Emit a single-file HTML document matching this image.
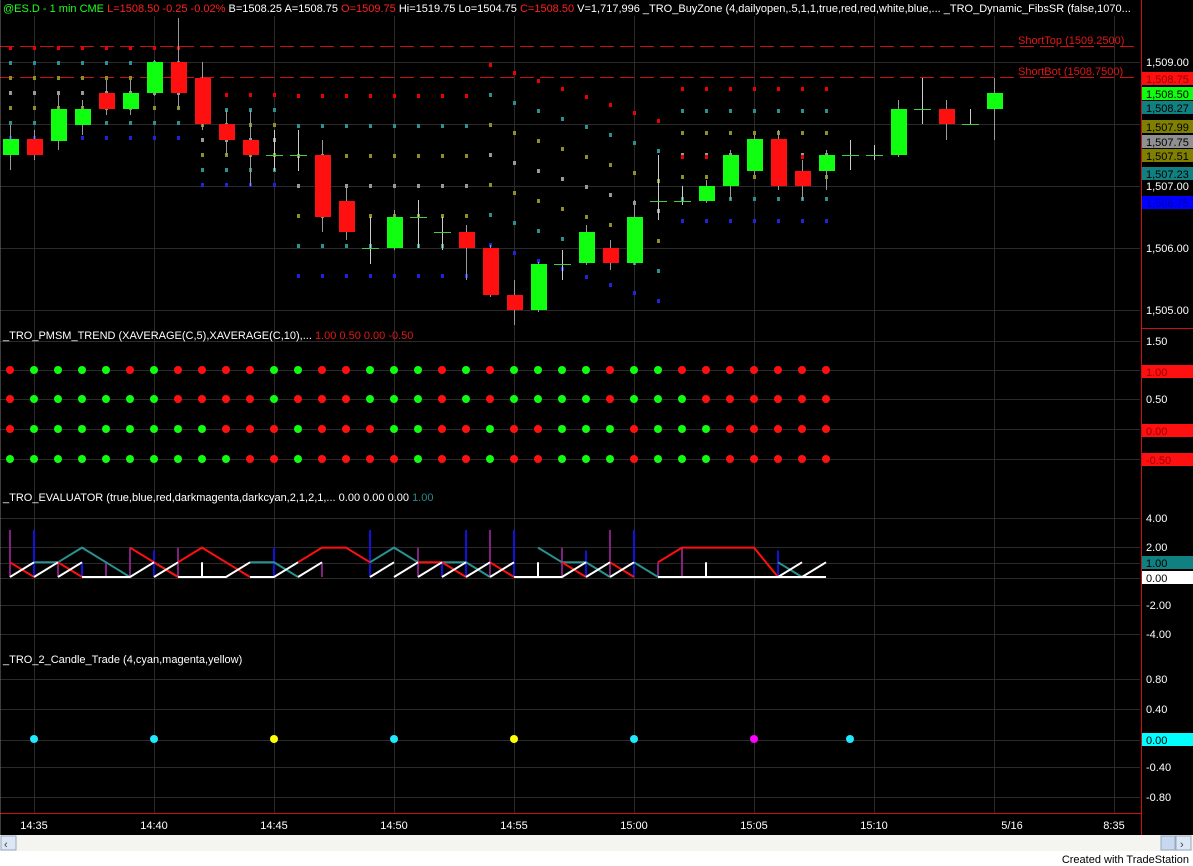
<!DOCTYPE html>
<html><head><meta charset="utf-8"><style>
html,body{margin:0;padding:0;background:#000;width:1193px;height:866px;overflow:hidden;font-family:"Liberation Sans",sans-serif}
svg{position:absolute;left:0;top:0}
text{font-family:"Liberation Sans",sans-serif;font-size:11px}
.ax{fill:#fff;font-size:11px}
</style></head><body>
<svg id="s" width="1193" height="866" viewBox="0 0 1193 866">
<rect width="1193" height="866" fill="#000"/>
<g id="grid" stroke="#2a2a2a" stroke-width="1"></g>
<!-- short lines -->
<line x1="0" y1="46.5" x2="1140" y2="46.5" stroke="#d01010" stroke-dasharray="14,6"/>
<line x1="0" y1="77.5" x2="1140" y2="77.5" stroke="#d01010" stroke-dasharray="14,6"/>
<text x="1018" y="44" fill="#e01818">ShortTop (1509.2500)</text>
<text x="1018" y="75" fill="#e01818">ShortBot (1508.7500)</text>
<g id="dots"></g>
<g id="candles"></g>
<g id="pm"></g>
<g id="ev" stroke-width="2" fill="none"></g>
<g id="tc"></g>
<!-- header -->
<rect x="0" y="0" width="1140" height="16" fill="#000"/>
<text x="3" y="12"><tspan fill="#20ff20">@ES.D - 1 min  CME</tspan><tspan fill="#ff2020">  L=1508.50  -0.25  -0.02%</tspan><tspan fill="#fff">  B=1508.25  A=1508.75</tspan><tspan fill="#ff2020">  O=1509.75</tspan><tspan fill="#fff">  Hi=1519.75  Lo=1504.75</tspan><tspan fill="#ff2020">  C=1508.50</tspan><tspan fill="#fff">  V=1,717,996   _TRO_BuyZone (4,dailyopen,.5,1,1,true,red,red,white,blue,...   _TRO_Dynamic_FibsSR (false,1070...</tspan></text>
<text x="3" y="339" fill="#fff">_TRO_PMSM_TREND (XAVERAGE(C,5),XAVERAGE(C,10),...  <tspan fill="#e01818">1.00  0.50  0.00  -0.50</tspan></text>
<text x="3" y="501" fill="#fff">_TRO_EVALUATOR (true,blue,red,darkmagenta,darkcyan,2,1,2,1,...  0.00  0.00  0.00  <tspan fill="#2a8a8a">1.00</tspan></text>
<text x="3" y="663" fill="#fff">_TRO_2_Candle_Trade (4,cyan,magenta,yellow)</text>
<!-- right axis -->
<line x1="1141.5" y1="0" x2="1141.5" y2="835" stroke="#d01010"/>
<line x1="0" y1="813.5" x2="1141" y2="813.5" stroke="#d01010"/>
<line x1="1141" y1="328.5" x2="1193" y2="328.5" stroke="#d01010"/>
<line x1="0" y1="0" x2="0" y2="835" stroke="#777"/>
<g class="ax">
<text x="1146" y="66">1,509.00</text>
<text x="1146" y="190">1,507.00</text>
<text x="1146" y="252">1,506.00</text>
<text x="1146" y="314">1,505.00</text>
<rect x="1142" y="72" width="51" height="13" fill="#ff1010"/><text x="1146" y="83" fill="#900">1,508.75</text>
<rect x="1142" y="87" width="51" height="13" fill="#10ff10"/><text x="1146" y="98" fill="#000">1,508.50</text>
<rect x="1142" y="101" width="51" height="13" fill="#108080"/><text x="1146" y="112" fill="#000">1,508.27</text>
<rect x="1142" y="120" width="51" height="13" fill="#808000"/><text x="1146" y="131" fill="#000">1,507.99</text>
<rect x="1142" y="135" width="51" height="13" fill="#909090"/><text x="1146" y="146" fill="#000">1,507.75</text>
<rect x="1142" y="149" width="51" height="13" fill="#808000"/><text x="1146" y="160" fill="#000">1,507.51</text>
<rect x="1142" y="167" width="51" height="13" fill="#108080"/><text x="1146" y="178" fill="#000">1,507.23</text>
<rect x="1142" y="196" width="51" height="13" fill="#0000ff"/><text x="1146" y="207" fill="#0000aa">1,506.75</text>
<text x="1146" y="345">1.50</text>
<rect x="1142" y="365" width="51" height="13" fill="#ff1010"/><text x="1146" y="376" fill="#900">1.00</text>
<text x="1146" y="403">0.50</text>
<rect x="1142" y="424" width="51" height="13" fill="#ff1010"/><text x="1146" y="435" fill="#900">0.00</text>
<rect x="1142" y="453" width="51" height="13" fill="#ff1010"/><text x="1146" y="464" fill="#900">-0.50</text>
<text x="1146" y="522">4.00</text>
<text x="1146" y="551">2.00</text>
<rect x="1142" y="556" width="51" height="13" fill="#108080"/><text x="1146" y="567" fill="#000">1.00</text>
<rect x="1142" y="571" width="51" height="13" fill="#fff"/><text x="1146" y="582" fill="#000">0.00</text>
<text x="1146" y="609">-2.00</text>
<text x="1146" y="638">-4.00</text>
<text x="1146" y="683">0.80</text>
<text x="1146" y="713">0.40</text>
<rect x="1142" y="733" width="51" height="13" fill="#00ffff"/><text x="1146" y="744" fill="#000">0.00</text>
<text x="1146" y="771">-0.40</text>
<text x="1146" y="801">-0.80</text>
</g>
<g class="ax" text-anchor="middle">
<text x="34" y="829">14:35</text><text x="154" y="829">14:40</text><text x="274" y="829">14:45</text><text x="394" y="829">14:50</text><text x="514" y="829">14:55</text><text x="634" y="829">15:00</text><text x="754" y="829">15:05</text><text x="874" y="829">15:10</text><text x="1012" y="829">5/16</text><text x="1114" y="829">8:35</text>
</g>
<!-- scrollbar -->
<rect x="0" y="835" width="1193" height="16" fill="#f4f4f0"/>
<rect x="1" y="836" width="15" height="14" fill="#dce6f4" stroke="#9ab"/><text x="4" y="848" fill="#345" font-size="11">‹</text>
<rect x="1161" y="836" width="14" height="14" fill="#c8d8f0" stroke="#9ab"/>
<rect x="1176" y="836" width="15" height="14" fill="#dce6f4" stroke="#9ab"/><text x="1180" y="848" fill="#345">›</text>
<rect x="0" y="851" width="1193" height="15" fill="#fff"/>
<text x="1189" y="863" fill="#000" text-anchor="end" font-size="11">Created with TradeStation</text>
</svg>
<script>
var NS="http://www.w3.org/2000/svg";
function el(p,t,a){var e=document.createElementNS(NS,t);for(var k in a)e.setAttribute(k,a[k]);document.getElementById(p).appendChild(e);return e;}
// grid
[34,154,274,394,514,634,754,874,994,1114].forEach(function(x){el("grid","line",{x1:x+.5,y1:16,x2:x+.5,y2:813,stroke:"#2a2a2a"});});
[62,124,186,248,310,341,370,399,429,459,518,547,563,578,605,634,679,709,740,767,797].forEach(function(y){el("grid","line",{x1:0,y1:y+.5,x2:1140,y2:y+.5,stroke:"#2a2a2a"});});
// candles: x, top, bottom, color(g/r/d), wickTop, wickBot
var C=[[10,139,155,"g",125,170],[34,139,155,"r",130,160],[58,109,141,"g",95,150],[82,109,125,"g",100,135],[106,93,109,"r",80,115],[130,93,109,"g",80,115],[154,62,93,"g",60,96],[178,62,93,"r",18,109],[202,78,124,"r",62,130],[226,124,140,"r",110,155],[250,140,155,"r",110,186],[274,155,155,"d",130,171],[298,155,155,"d",130,171],[322,155,217,"r",140,232],[346,201,232,"r",186,240],[370,248,248,"d",217,264],[394,217,248,"g",210,250],[418,217,217,"d",200,248],[442,232,232,"d",217,250],[466,232,248,"r",225,280],[490,248,295,"r",245,297],[514,295,310,"r",280,325],[538,264,310,"g",262,312],[562,264,264,"d",250,280],[586,232,263,"g",225,265],[610,248,263,"r",240,270],[634,217,263,"g",200,265],[658,201,201,"d",155,220],[682,201,201,"d",186,205],[706,186,201,"g",180,203],[730,155,186,"g",150,200],[754,139,171,"g",135,175],[778,139,186,"r",130,190],[802,171,186,"r",160,200],[826,155,171,"g",150,190],[850,155,155,"d",140,170],[874,155,155,"d",145,160],[898,109,155,"g",100,157],[922,109,109,"d",78,124],[946,109,124,"r",100,140],[970,124,124,"d",109,124],[994,93,109,"g",78,140]];
C.forEach(function(c){var x=c[0];el("candles","line",{x1:x+.5,y1:c[4],x2:x+.5,y2:c[5],stroke:c[3]=="d"?"#ccc":"#999"});
if(c[3]=="d"){el("candles","line",{x1:x-8,y1:c[1]+.5,x2:x+9,y2:c[1]+.5,stroke:"#4c4"});}
else el("candles","rect",{x:x-7,y:c[1],width:16,height:Math.max(c[2]-c[1],2),fill:c[3]=="g"?"#10ff10":"#ff1010"});});
// scattered level dots
var lv=[[10,45,93,"#e00"],[10,45,171,"#22d"]];
var cols=["#e00","#2a9090","#909020","#999","#909020","#2a9090","#22d"];
for(var i=0;i<35;i++){var x=10+24*i;var base=i<8?93:(i<12?140:(i<20?186:(i<28?217:(i<35?155:155))));var sp=i<12?15:(i<28?30:22);
 if(i>=20&&i<28) base=155+ (i-20)*8;
 for(var k=0;k<7;k++){var y=base+(k-3)*sp;if(y<18||y>326)continue;el("dots","rect",{x:x-1,y:y-2,width:3,height:4,fill:cols[k]});}}
for(var i=28;i<35;i++){el("dots","rect",{x:10+24*i-1,y:155,width:3,height:4,fill:"#e00"});}
[898].forEach(function(){});
// PMSM
var R=["rggggrgrrrrggrrgggrgrggggrggrrrrrrr","rggggggrrrrgrrrgggrgrggggrgggrrrrrr","rggggggggrrrgrrrggrrgrrgggrgggrrrrrr","ggggggggggrrgrrrrgrrgrrgggrgggrrrrrr"];
var ys=[370,399,429,459];
R.forEach(function(r,j){for(var i=0;i<35;i++){el("pm","circle",{cx:10+24*i,cy:ys[j],r:4,fill:r[i]=="g"?"#10ff10":"#ff1010"});}});
// evaluator
var Y0=577,U=14.7;function yy(v){return Y0-v*U;}
function pl(c,pts){el("ev","polyline",{points:pts.map(function(p){return p[0]+","+yy(p[1]);}).join(" "),stroke:c});}
// vertical spikes
[[10,3.2,"#802080"],[34,3.2,"#1010e0"],[58,1,"#802080"],[82,1,"#1010e0"],[106,1,"#802080"],[130,2,"#802080"],[154,1.8,"#1010e0"],[178,2,"#802080"],[274,2,"#1010e0"],[322,1,"#802080"],[370,3.2,"#1010e0"],[418,2,"#802080"],[442,1,"#1010e0"],[466,3.2,"#1010e0"],[490,3.2,"#802080"],[514,3.2,"#1010e0"],[562,2,"#802080"],[586,1.8,"#1010e0"],[610,3.2,"#802080"],[634,3.2,"#1010e0"],[658,1,"#802080"],[682,2,"#802080"],[778,1.8,"#1010e0"]].forEach(function(s){el("ev","line",{x1:s[0],y1:yy(0),x2:s[0],y2:yy(s[1]),stroke:s[2]});});
pl("#2a9090",[[34,1],[58,1],[82,2],[106,1],[130,0]]);
pl("#2a9090",[[154,1],[178,0]]);pl("#2a9090",[[250,1],[274,1],[298,0]]);
pl("#2a9090",[[370,1],[394,2],[418,1]]);pl("#2a9090",[[442,1],[466,1],[490,0]]);
pl("#2a9090",[[538,2],[562,1],[586,1],[610,0]]);pl("#2a9090",[[634,1],[658,0]]);pl("#2a9090",[[778,1],[802,0]]);
pl("#ff1010",[[10,1],[34,0]]);pl("#ff1010",[[58,1],[82,0]]);pl("#ff1010",[[130,2],[154,1],[178,0]]);
pl("#ff1010",[[178,1],[202,2],[226,1],[250,0]]);pl("#ff1010",[[298,1],[322,2],[346,2],[370,1]]);
pl("#ff1010",[[418,1],[442,1],[466,0]]);pl("#ff1010",[[490,1],[514,0]]);pl("#ff1010",[[562,1],[586,0]]);
pl("#ff1010",[[610,1],[634,0]]);pl("#ff1010",[[658,1],[682,2],[754,2],[778,0]]);
pl("#fff",[[10,0],[34,1]]);pl("#fff",[[34,0],[58,1]]);pl("#fff",[[58,0],[82,1]]);pl("#fff",[[82,0],[130,0],[154,1]]);
pl("#fff",[[154,0],[178,1]]);pl("#fff",[[178,0],[202,0]]);el("ev","line",{x1:202,y1:yy(0),x2:202,y2:yy(1),stroke:"#fff"});
pl("#fff",[[202,0],[226,0],[250,1]]);pl("#fff",[[250,0],[274,0],[298,1]]);pl("#fff",[[298,0],[322,1]]);
pl("#fff",[[370,0],[394,1]]);pl("#fff",[[394,0],[418,1]]);pl("#fff",[[418,0],[442,1]]);pl("#fff",[[442,0],[466,1]]);
pl("#fff",[[466,0],[490,1]]);pl("#fff",[[490,0],[514,1]]);pl("#fff",[[514,0],[562,0],[586,1]]);
el("ev","line",{x1:538,y1:yy(0),x2:538,y2:yy(1),stroke:"#fff"});
pl("#fff",[[586,0],[610,1]]);pl("#fff",[[610,0],[634,1]]);pl("#fff",[[658,0],[778,0],[802,1]]);
el("ev","line",{x1:706,y1:yy(0),x2:706,y2:yy(1),stroke:"#fff"});
pl("#fff",[[778,0],[826,0]]);pl("#fff",[[802,0],[826,1]]);
// 2 candle
[[34,"#20e8ff"],[154,"#20e8ff"],[274,"#ffff00"],[394,"#20e8ff"],[514,"#ffff00"],[634,"#20e8ff"],[754,"#ff00ff"],[850,"#20e8ff"]].forEach(function(d){el("tc","circle",{cx:d[0],cy:739,r:4,fill:d[1]});});
</script>
</body></html>
